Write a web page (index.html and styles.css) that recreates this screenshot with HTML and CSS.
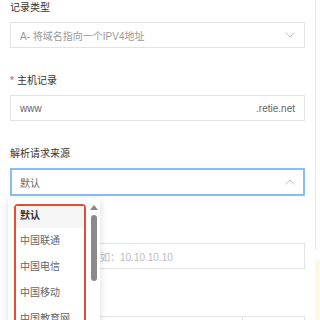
FILE: index.html
```html
<!DOCTYPE html>
<html>
<head>
    <meta charset="UTF-8">
    <meta name="viewport" content="width=device-width, initial-scale=1.0">
    <title>添加记录</title>
    <link rel="stylesheet" href="styles.css">
</head>
<body>
    <div class="page">
        <form class="record-form">
            <div class="form-item">
                <label class="form-label">记录类型</label>
                <div class="select">
                    <span class="select-value">A- 将域名指向一个IPV4地址</span>
                    <svg class="arrow" width="10" height="6" viewBox="0 0 10 6"><polyline points="0.5,0.5 5,5 9.5,0.5" fill="none" stroke="#c4c4c4" stroke-width="1"/></svg>
                </div>
            </div>

            <div class="form-item">
                <label class="form-label"><span class="required">*</span>主机记录</label>
                <div class="input">
                    <span class="input-value">www</span>
                    <span class="suffix">.retie.net</span>
                </div>
            </div>

            <div class="form-item">
                <label class="form-label">解析请求来源</label>
                <div class="select-wrap">
                    <div class="select is-open">
                        <span class="select-value dark">默认</span>
                        <svg class="arrow" width="10" height="6" viewBox="0 0 10 6"><polyline points="0.5,5.5 5,1 9.5,5.5" fill="none" stroke="#c4c4c4" stroke-width="1"/></svg>
                    </div>
                    <div class="dropdown">
                        <ul class="options">
                            <li class="option selected">默认</li>
                            <li class="option">中国联通</li>
                            <li class="option">中国电信</li>
                            <li class="option">中国移动</li>
                            <li class="option">中国教育网</li>
                        </ul>
                        <div class="scrollbar">
                            <span class="scroll-up"></span>
                            <span class="scroll-thumb"></span>
                        </div>
                    </div>
                </div>
            </div>

            <div class="form-item">
                <label class="form-label">记录值</label>
                <div class="input">
                    <span class="placeholder">例如：10.10.10.10</span>
                </div>
            </div>

            <div class="form-item">
                <label class="form-label">TTL</label>
                <div class="input-group">
                    <div class="input grow"></div>
                    <div class="input unit"></div>
                </div>
            </div>
        </form>

        <aside class="side">
            <div class="side-card"></div>
            <div class="side-tip"></div>
        </aside>
    </div>
</body>
</html>
```

FILE: styles.css
```css
body {
    margin: 0;
    background: #fff;
    font-family: "Liberation Sans", "Noto Sans CJK SC", sans-serif;
    font-size: 10px;
    color: #333;
}

.page {
    display: flex;
    align-items: flex-start;
    height: 320px;
    overflow: hidden;
}

.record-form {
    width: 295px;
    margin-left: 10px;
}

.form-item {
    margin-bottom: 25px;
}

.form-label {
    display: block;
    height: 16px;
    line-height: 16px;
    margin-bottom: 6px;
    color: #333;
}

.required {
    color: #f04134;
    margin-right: 3px;
}

.select,
.input {
    display: flex;
    align-items: center;
    justify-content: space-between;
    height: 26px;
    padding: 0 9px;
    border: 1px solid #e3e3e3;
    box-sizing: border-box;
    background: #fff;
}

.select-value {
    color: #999;
}

.select-value.dark,
.input-value,
.suffix {
    color: #666;
}

.placeholder {
    color: #bbb;
    padding-left: 70px;
}

.select.is-open {
    height: 28px;
    border: 2px solid #86c0f2;
    padding: 0 8px;
}

.select-wrap {
    position: relative;
}

.dropdown {
    position: absolute;
    top: 30px;
    left: -2px;
    width: 92px;
    height: 150px;
    background: #fff;
    box-shadow: 0 2px 8px rgba(0, 0, 0, 0.15);
    display: flex;
    padding: 6px 0 0 6px;
    box-sizing: border-box;
    z-index: 2;
}

.options {
    list-style: none;
    margin: 0;
    padding: 0;
    width: 72px;
    height: 140px;
    border: 2px solid #ec4a35;
    border-radius: 4px;
    box-sizing: border-box;
}

.option {
    height: 26px;
    line-height: 26px;
    padding-left: 4px;
    color: #666;
}

.option.selected {
    height: 22px;
    line-height: 20px;
    background: #f5f5f5;
    color: #333;
    font-weight: bold;
}

.scrollbar {
    display: flex;
    flex-direction: column;
    align-items: center;
    width: 8px;
    margin-left: 4px;
}

.scroll-up {
    width: 0;
    height: 0;
    margin-top: 1px;
    border-left: 4px solid transparent;
    border-right: 4px solid transparent;
    border-bottom: 5px solid #888;
}

.scroll-thumb {
    width: 6px;
    height: 66px;
    margin-top: 5px;
    border-radius: 3px;
    background: #8a8a8a;
}

.input-group {
    display: flex;
}

.grow {
    flex: 1;
}

.unit {
    width: 62px;
    border-left: none;
}

.side {
    margin-left: 10px;
    flex: 1;
}

.side-card {
    height: 250px;
    border-left: 1px solid #e8e8e8;
}

.side-tip {
    height: 70px;
    margin-top: 10px;
    background: #fdf8e4;
}
```
